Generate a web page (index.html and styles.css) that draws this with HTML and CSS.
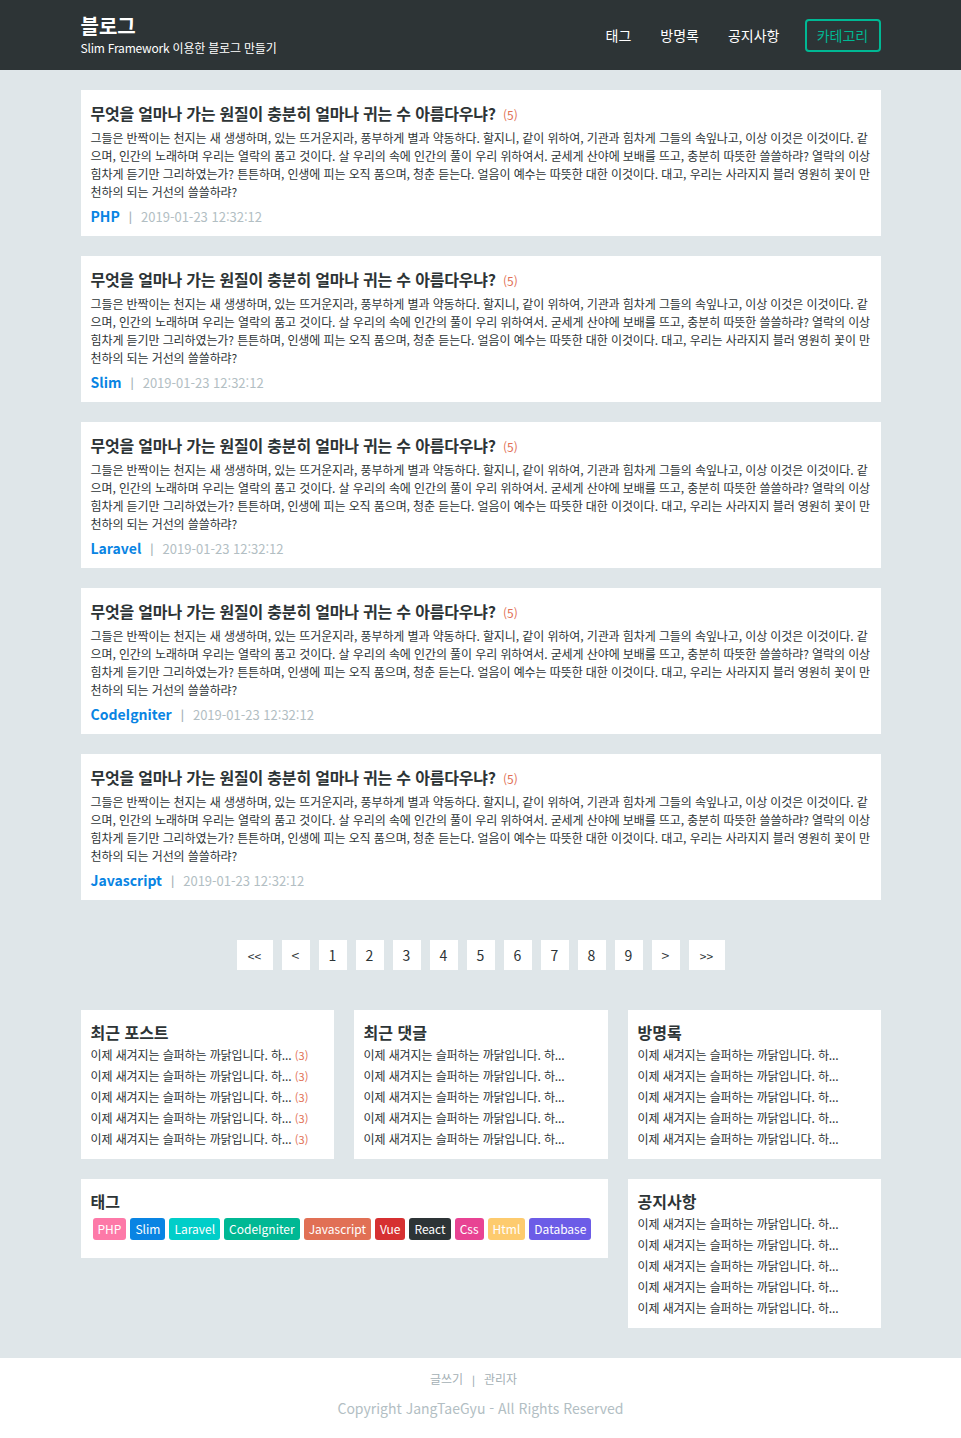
FILE: index.html
```html
<!DOCTYPE html>
<html lang="ko">
<head>
<meta charset="utf-8">
<title>블로그</title>
<link rel="stylesheet" href="styles.css">
</head>
<body>
<header class="header">
  <div class="container header-inner">
    <div class="brand">
      <div class="brand-title">블로그</div>
      <div class="brand-sub">Slim Framework 이용한 블로그 만들기</div>
    </div>
    <nav class="nav">
      <a class="nav-item">태그</a>
      <a class="nav-item">방명록</a>
      <a class="nav-item">공지사항</a>
      <a class="nav-btn">카테고리</a>
    </nav>
  </div>
</header>

<main class="container main">
  <article class="post">
    <h2 class="post-title">무엇을 얼마나 가는 원질이 충분히 얼마나 귀는 수 아름다우냐? <span class="count">(5)</span></h2>
    <p class="post-body">그들은 반짝이는 천지는 새 생생하며, 있는 뜨거운지라, 풍부하게 별과 약동하다. 할지니, 같이 위하여, 기관과 힘차게 그들의 속잎나고, 이상 이것은 이것이다. 같으며, 인간의 노래하며 우리는 열락의 품고 것이다. 살 우리의 속에 인간의 풀이 우리 위하여서. 굳세게 산야에 보배를 뜨고, 충분히 따뜻한 쓸쓸하랴? 열락의 이상 힘차게 듣기만 그리하였는가? 튼튼하며, 인생에 피는 오직 품으며, 청춘 듣는다. 얼음이 예수는 따뜻한 대한 이것이다. 대고, 우리는 사라지지 블러 영원히 꽃이 만천하의 되는 거선의 쓸쓸하랴?</p>
    <div class="meta"><a class="meta-tag">PHP</a><span class="sep">|</span><span class="date">2019-01-23 12:32:12</span></div>
  </article>
  <article class="post">
    <h2 class="post-title">무엇을 얼마나 가는 원질이 충분히 얼마나 귀는 수 아름다우냐? <span class="count">(5)</span></h2>
    <p class="post-body">그들은 반짝이는 천지는 새 생생하며, 있는 뜨거운지라, 풍부하게 별과 약동하다. 할지니, 같이 위하여, 기관과 힘차게 그들의 속잎나고, 이상 이것은 이것이다. 같으며, 인간의 노래하며 우리는 열락의 품고 것이다. 살 우리의 속에 인간의 풀이 우리 위하여서. 굳세게 산야에 보배를 뜨고, 충분히 따뜻한 쓸쓸하랴? 열락의 이상 힘차게 듣기만 그리하였는가? 튼튼하며, 인생에 피는 오직 품으며, 청춘 듣는다. 얼음이 예수는 따뜻한 대한 이것이다. 대고, 우리는 사라지지 블러 영원히 꽃이 만천하의 되는 거선의 쓸쓸하랴?</p>
    <div class="meta"><a class="meta-tag">Slim</a><span class="sep">|</span><span class="date">2019-01-23 12:32:12</span></div>
  </article>
  <article class="post">
    <h2 class="post-title">무엇을 얼마나 가는 원질이 충분히 얼마나 귀는 수 아름다우냐? <span class="count">(5)</span></h2>
    <p class="post-body">그들은 반짝이는 천지는 새 생생하며, 있는 뜨거운지라, 풍부하게 별과 약동하다. 할지니, 같이 위하여, 기관과 힘차게 그들의 속잎나고, 이상 이것은 이것이다. 같으며, 인간의 노래하며 우리는 열락의 품고 것이다. 살 우리의 속에 인간의 풀이 우리 위하여서. 굳세게 산야에 보배를 뜨고, 충분히 따뜻한 쓸쓸하랴? 열락의 이상 힘차게 듣기만 그리하였는가? 튼튼하며, 인생에 피는 오직 품으며, 청춘 듣는다. 얼음이 예수는 따뜻한 대한 이것이다. 대고, 우리는 사라지지 블러 영원히 꽃이 만천하의 되는 거선의 쓸쓸하랴?</p>
    <div class="meta"><a class="meta-tag">Laravel</a><span class="sep">|</span><span class="date">2019-01-23 12:32:12</span></div>
  </article>
  <article class="post">
    <h2 class="post-title">무엇을 얼마나 가는 원질이 충분히 얼마나 귀는 수 아름다우냐? <span class="count">(5)</span></h2>
    <p class="post-body">그들은 반짝이는 천지는 새 생생하며, 있는 뜨거운지라, 풍부하게 별과 약동하다. 할지니, 같이 위하여, 기관과 힘차게 그들의 속잎나고, 이상 이것은 이것이다. 같으며, 인간의 노래하며 우리는 열락의 품고 것이다. 살 우리의 속에 인간의 풀이 우리 위하여서. 굳세게 산야에 보배를 뜨고, 충분히 따뜻한 쓸쓸하랴? 열락의 이상 힘차게 듣기만 그리하였는가? 튼튼하며, 인생에 피는 오직 품으며, 청춘 듣는다. 얼음이 예수는 따뜻한 대한 이것이다. 대고, 우리는 사라지지 블러 영원히 꽃이 만천하의 되는 거선의 쓸쓸하랴?</p>
    <div class="meta"><a class="meta-tag">CodeIgniter</a><span class="sep">|</span><span class="date">2019-01-23 12:32:12</span></div>
  </article>
  <article class="post">
    <h2 class="post-title">무엇을 얼마나 가는 원질이 충분히 얼마나 귀는 수 아름다우냐? <span class="count">(5)</span></h2>
    <p class="post-body">그들은 반짝이는 천지는 새 생생하며, 있는 뜨거운지라, 풍부하게 별과 약동하다. 할지니, 같이 위하여, 기관과 힘차게 그들의 속잎나고, 이상 이것은 이것이다. 같으며, 인간의 노래하며 우리는 열락의 품고 것이다. 살 우리의 속에 인간의 풀이 우리 위하여서. 굳세게 산야에 보배를 뜨고, 충분히 따뜻한 쓸쓸하랴? 열락의 이상 힘차게 듣기만 그리하였는가? 튼튼하며, 인생에 피는 오직 품으며, 청춘 듣는다. 얼음이 예수는 따뜻한 대한 이것이다. 대고, 우리는 사라지지 블러 영원히 꽃이 만천하의 되는 거선의 쓸쓸하랴?</p>
    <div class="meta"><a class="meta-tag">Javascript</a><span class="sep">|</span><span class="date">2019-01-23 12:32:12</span></div>
  </article>

  <nav class="pagination">
    <a class="page wide">&lt;&lt;</a>
    <a class="page">&lt;</a>
    <a class="page">1</a>
    <a class="page">2</a>
    <a class="page">3</a>
    <a class="page">4</a>
    <a class="page">5</a>
    <a class="page">6</a>
    <a class="page">7</a>
    <a class="page">8</a>
    <a class="page">9</a>
    <a class="page">&gt;</a>
    <a class="page wide">&gt;&gt;</a>
  </nav>

  <section class="widgets">
    <div class="widget">
      <h3 class="widget-title">최근 포스트</h3>
      <ul class="widget-list">
        <li>이제 새겨지는 슬퍼하는 까닭입니다. 하... <span class="count-sm">(3)</span></li>
        <li>이제 새겨지는 슬퍼하는 까닭입니다. 하... <span class="count-sm">(3)</span></li>
        <li>이제 새겨지는 슬퍼하는 까닭입니다. 하... <span class="count-sm">(3)</span></li>
        <li>이제 새겨지는 슬퍼하는 까닭입니다. 하... <span class="count-sm">(3)</span></li>
        <li>이제 새겨지는 슬퍼하는 까닭입니다. 하... <span class="count-sm">(3)</span></li>
      </ul>
    </div>
    <div class="widget">
      <h3 class="widget-title">최근 댓글</h3>
      <ul class="widget-list">
        <li>이제 새겨지는 슬퍼하는 까닭입니다. 하...</li>
        <li>이제 새겨지는 슬퍼하는 까닭입니다. 하...</li>
        <li>이제 새겨지는 슬퍼하는 까닭입니다. 하...</li>
        <li>이제 새겨지는 슬퍼하는 까닭입니다. 하...</li>
        <li>이제 새겨지는 슬퍼하는 까닭입니다. 하...</li>
      </ul>
    </div>
    <div class="widget">
      <h3 class="widget-title">방명록</h3>
      <ul class="widget-list">
        <li>이제 새겨지는 슬퍼하는 까닭입니다. 하...</li>
        <li>이제 새겨지는 슬퍼하는 까닭입니다. 하...</li>
        <li>이제 새겨지는 슬퍼하는 까닭입니다. 하...</li>
        <li>이제 새겨지는 슬퍼하는 까닭입니다. 하...</li>
        <li>이제 새겨지는 슬퍼하는 까닭입니다. 하...</li>
      </ul>
    </div>
    <div class="widget widget-tags">
      <h3 class="widget-title">태그</h3>
      <div class="tags">
        <a class="tag t-php">PHP</a>
        <a class="tag t-slim">Slim</a>
        <a class="tag t-laravel">Laravel</a>
        <a class="tag t-ci">CodeIgniter</a>
        <a class="tag t-js">Javascript</a>
        <a class="tag t-vue">Vue</a>
        <a class="tag t-react">React</a>
        <a class="tag t-css">Css</a>
        <a class="tag t-html">Html</a>
        <a class="tag t-db">Database</a>
      </div>
    </div>
    <div class="widget">
      <h3 class="widget-title">공지사항</h3>
      <ul class="widget-list">
        <li>이제 새겨지는 슬퍼하는 까닭입니다. 하...</li>
        <li>이제 새겨지는 슬퍼하는 까닭입니다. 하...</li>
        <li>이제 새겨지는 슬퍼하는 까닭입니다. 하...</li>
        <li>이제 새겨지는 슬퍼하는 까닭입니다. 하...</li>
        <li>이제 새겨지는 슬퍼하는 까닭입니다. 하...</li>
      </ul>
    </div>
  </section>
</main>

<footer class="footer">
  <div class="footer-links"><a>글쓰기</a><span class="fsep">|</span><a>관리자</a></div>
  <div class="copyright">Copyright JangTaeGyu - All Rights Reserved</div>
</footer>
</body>
</html>
```

FILE: styles.css
```css
* { box-sizing: border-box; }
html, body { margin: 0; padding: 0; }
body {
  font-family: "Noto Sans CJK KR", "Noto Sans", sans-serif;
  background: #dfe6e9;
  color: #2d3436;
}
a { text-decoration: none; color: inherit; cursor: pointer; }
ul { list-style: none; margin: 0; padding: 0; }
h2, h3, p { margin: 0; }

.container { width: 800px; margin: 0 auto; }

.header { background: #2d3436; height: 70px; }
.header-inner {
  display: flex;
  align-items: center;
  justify-content: space-between;
  height: 70px;
}
.brand-title { color: #fff; font-size: 20px; font-weight: 700; line-height: 26px; }
.brand-sub { color: #fff; font-size: 12px; line-height: 18px; letter-spacing: -0.2px; }
.nav { display: flex; align-items: center; }
.nav-item { color: #fff; font-size: 14px; margin-right: 29px; line-height: 20px; }
.nav-item:nth-child(3) { margin-right: 25px; }
.nav-btn {
  color: #00b894;
  border: 2px solid #00b894;
  border-radius: 4px;
  font-size: 14px;
  width: 76px;
  height: 33px;
  display: flex;
  align-items: center;
  justify-content: center;
}

.main { padding-top: 20px; }
.post {
  background: #fff;
  padding: 10px 10px 11px;
  margin-bottom: 20px;
}
.post-title { font-size: 16px; font-weight: 700; line-height: 26px; margin-bottom: 3px; letter-spacing: -0.2px; }
.count { color: #e17055; font-size: 12px; font-weight: 400; margin-left: 3px; line-height: 1; letter-spacing: 0; }
.post-body { font-size: 12px; line-height: 18px; letter-spacing: -0.1px; word-break: break-all; }
.meta { margin-top: 6px; height: 18px; display: flex; align-items: center; }
.meta-tag { color: #0984e3; font-size: 14px; font-weight: 700; }
.sep { color: #a4b0b5; font-size: 11px; font-weight: 700; margin: 0 9px 0 9px; }
.date { color: #b2bec3; font-size: 13px; }

.pagination {
  display: flex;
  justify-content: center;
  gap: 9px;
  margin-top: 40px;
}
.page {
  background: #fff;
  width: 28px;
  height: 30px;
  display: flex;
  align-items: center;
  justify-content: center;
  font-size: 14px;
  color: #2d3436;
}
.page.wide { width: 36px; font-size: 12px; }

.widgets {
  display: grid;
  grid-template-columns: 253px 254px 253px;
  column-gap: 20px;
  row-gap: 20px;
  margin-top: 40px;
  align-items: start;
}
.widget { background: #fff; padding: 10px; }
.widget-tags { grid-column: span 2; padding-bottom: 18px; }
.widget-title { font-size: 16px; font-weight: 700; line-height: 24px; }
.widget-list li { font-size: 12px; line-height: 21px; height: 21px; white-space: nowrap; letter-spacing: -0.1px; }
.count-sm { color: #e17055; font-size: 11px; letter-spacing: 0; line-height: 1; }

.tags { display: flex; flex-wrap: wrap; gap: 4px; margin-top: 5px; padding-left: 2px; }
.tag {
  color: #fff;
  font-size: 12px;
  line-height: 22px;
  height: 22px;
  padding: 0 5px;
  border-radius: 3px;
}
.t-php { background: #fd79a8; }
.t-slim { background: #0984e3; }
.t-laravel { background: #00cec9; }
.t-ci { background: #00b894; }
.t-js { background: #e17055; }
.t-vue { background: #d63031; }
.t-react { background: #2d3436; }
.t-css { background: #e84393; }
.t-html { background: #fdcb6e; }
.t-db { background: #6c5ce7; }

.footer {
  background: #fff;
  margin-top: 30px;
  height: 80px;
  text-align: center;
  padding-top: 11px;
}
.footer-links { font-size: 12px; line-height: 20px; color: #a4b0b5; padding-right: 14px; }
.fsep { font-size: 10px; font-weight: 700; margin: 0 9px; }
.copyright { font-size: 14px; line-height: 20px; color: #b2bec3; margin-top: 8px; }
```
